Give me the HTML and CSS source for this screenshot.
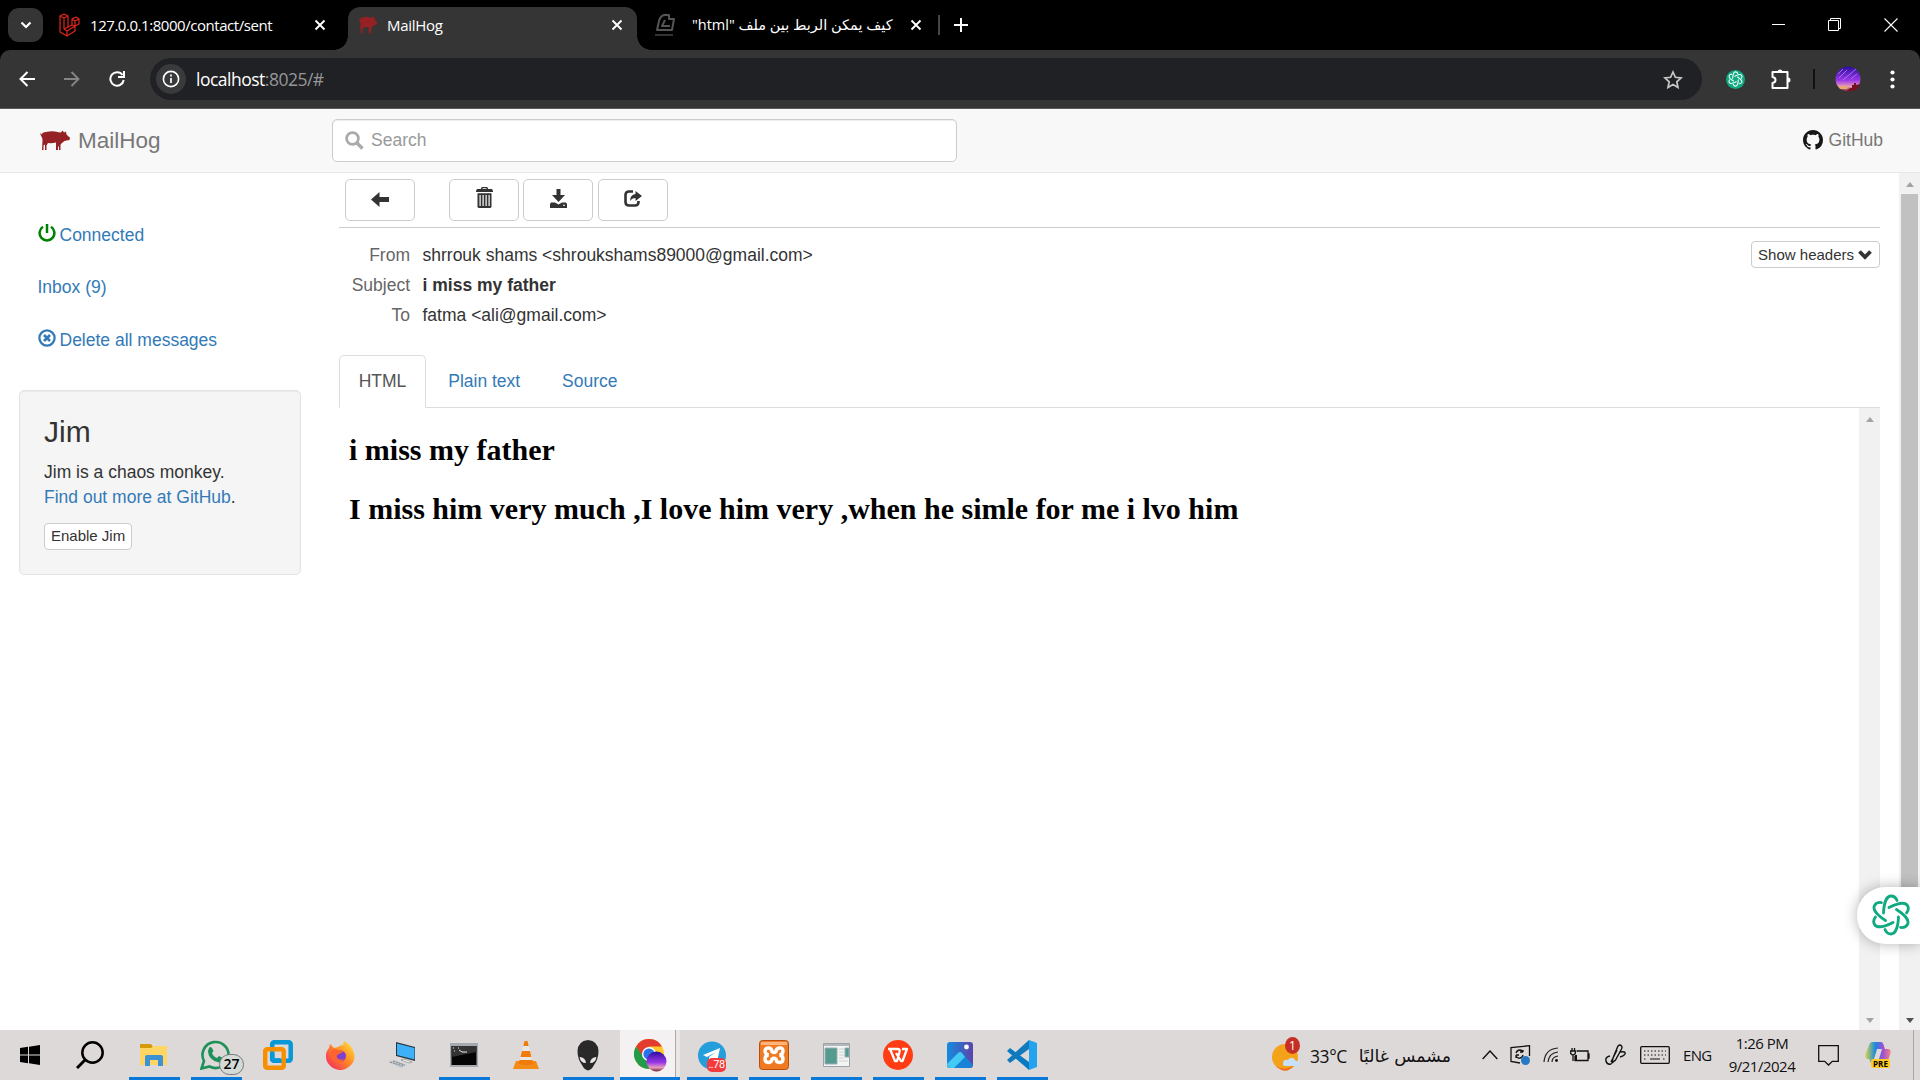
FILE: index.html
```html
<!DOCTYPE html>
<html lang="en">
<head>
<meta charset="utf-8">
<title>MailHog</title>
<link rel="stylesheet" href="styles.css">
</head>
<body>
<svg class="defs" width="0" height="0">
  <symbol id="pig" viewBox="0 0 30 20"><path d="M1.500 6Q0 4 .5 2.500L2 4q0-2.500 4-2.500 5-1 9-.5 4 1 6 1l1.500-2L24 2l2-1 .5 3 2 2 1.500 1-.5 2.500-3 .5q-2 0-4 2l-2 2v5.500h-1.500v-4l-1 1v3h-2V12q-4 1-8 .5L6.500 15v4.500H5V14l-1.500 1v4.500H2L2.500 10Q2.500 8 1.500 6z"/></symbol>
  <symbol id="knot" viewBox="0 0 40 42"><g fill="none" stroke="currentColor" stroke-width="2.800" stroke-linecap="round"><path id="petal" d="M12.500 19C13 8 16 2 20 2c3 0 5 2 6 4.500"/><use href="#petal" transform="rotate(60 20 21)"/><use href="#petal" transform="rotate(120 20 21)"/><use href="#petal" transform="rotate(180 20 21)"/><use href="#petal" transform="rotate(240 20 21)"/><use href="#petal" transform="rotate(300 20 21)"/></g></symbol>
  <symbol id="cross" viewBox="0 0 12 12"><path d="m1.500 1.500 9 9m0-9-9 9" fill="none" stroke="currentColor" stroke-width="1.900"/></symbol>
  <linearGradient id="night" x2="0" y2="1"><stop stop-color="#2c0ca0"/><stop offset=".55" stop-color="#9a38e8"/><stop offset=".8" stop-color="#e79abb"/><stop offset="1" stop-color="#722032"/></linearGradient>
</svg>

<header class="tabstrip">
  <button class="tab-search"><svg width="12" height="8" viewBox="0 0 12 8"><path d="m1.500 1.500 4.500 4.500 4.500-4.500" fill="none" stroke="#fff" stroke-width="2.200"/></svg></button>
  <div class="tab tab-laravel">
    <svg width="21" height="24" viewBox="0 0 21 24" fill="none" stroke="#e3261c" stroke-width="1.200" stroke-linejoin="round"><path d="m1 3 4-2 4 2v11l4-2V6l4-2 3 2v5l-4 2v5l-8 5-7-4zm0 0 4 2 4-2M5 5v11l4-2m-4 2 3 2 8-5m-8 5v5m5-17 3 2 4-2m-4 2v5m-3-1 3 1"/></svg>
    <span class="tab-title title-laravel">127.0.0.1:8000/contact/sent</span>
    <svg class="tab-close" width="12" height="12"><use href="#cross"/></svg>
  </div>
  <div class="tab tab-active">
    <svg width="18" height="18" viewBox="0 0 30 20" preserveAspectRatio="none" fill="#962124"><use href="#pig" width="30" height="20"/></svg>
    <span class="tab-title title-mailhog">MailHog</span>
    <svg class="tab-close" width="12" height="12"><use href="#cross"/></svg>
  </div>
  <div class="tab tab-arabic">
    <svg width="20" height="24" viewBox="0 0 20 24" fill="none" stroke="#555" stroke-width="2"><path d="M2 17 4 8q2-7 8-6h2v4h5l-2 11zM10 7 7 13h8" stroke-linejoin="round"/><path d="M0 22h18" stroke="#333"/></svg>
    <span class="tab-title title-arabic" dir="rtl">كيف يمكن الربط بين ملف "html"</span>
    <svg class="tab-close" width="12" height="12"><use href="#cross"/></svg>
  </div>
  <span class="tab-divider"></span>
  <svg class="new-tab" width="14" height="14" viewBox="0 0 14 14"><path d="M7 0v14M0 7h14" stroke="#fff" stroke-width="2"/></svg>
  <div class="window-controls">
    <svg width="13" height="13" viewBox="0 0 13 13"><path d="M0 6.500h13" stroke="#fff"/></svg>
    <svg width="13" height="13" viewBox="0 0 13 13" fill="none" stroke="#fff"><path d="M.5 2.500h10v10H.5zM2.500 2V.5h10v10H11"/></svg>
    <svg width="14" height="14" viewBox="0 0 14 14"><path d="m.5.5 13 13m0-13-13 13" stroke="#fff" stroke-width="1.100"/></svg>
  </div>
</header>

<div class="toolbar">
  <div class="nav-buttons">
    <svg width="16" height="16" viewBox="0 0 16 16" fill="none" stroke="#fff" stroke-width="2"><path d="M16 8H1.500M8.500 1l-7 7 7 7"/></svg>
    <svg width="16" height="16" viewBox="0 0 16 16" fill="none" stroke="#858585" stroke-width="1.900"><path d="M0 8h14.500M7.500 1l7 7-7 7"/></svg>
    <svg width="16" height="16" viewBox="0 0 16 16" fill="none" stroke="#fff" stroke-width="2"><path d="M13.500 4A6.700 6.700 0 1 0 14.700 9M15 0v6H9"/></svg>
  </div>
  <div class="omnibox">
    <span class="site-info"><svg width="18" height="18" viewBox="0 0 18 18"><circle cx="9" cy="9" r="7.600" fill="none" stroke="#fff" stroke-width="1.600"/><path d="M9 8v5M9 4.500v2" stroke="#fff" stroke-width="1.700"/></svg></span>
    <span class="url"><b>localhost</b>:8025/#</span>
    <svg class="star" width="20" height="19" viewBox="0 0 20 19"><path d="m10 2 2.400 5.300 5.700.6-4.300 3.900 1.200 5.700-5-2.900-5 2.900 1.200-5.700L1.900 7.900l5.700-.6z" fill="none" stroke="#c7c7c7" stroke-width="1.700"/></svg>
  </div>
  <div class="extensions">
    <span class="gpt"><svg width="15" height="16"><use href="#knot"/></svg></span>
    <svg class="puzzle" width="22" height="21" viewBox="0 0 22 21"><path d="M2.500 3h15v16h-15v-5q3-.5 3-3t-3-3z" fill="none" stroke="#fff" stroke-width="2" stroke-linejoin="round"/><path d="M7.500 3a2.500 2.500 0 0 1 5 0zm10.500 5.500a2.500 2.500 0 0 1 0 5z" fill="#fff"/></svg>
    <span class="ext-divider"></span>
    <svg class="avatar" width="26" height="26" viewBox="0 0 26 26"><circle cx="13" cy="13" r="12.500" fill="url(#night)"/><path d="m4 12 8-8m-4 10 13-11M3 8l5-5m8 10 6-5" stroke="#b585f5" stroke-width=".8"/><path d="M15 22h2v-3h2v-2h2v2l4-1q-2 5-6 7h-7z" fill="#741222"/><path d="M3 20h10l-1 3H5z" fill="#e9aa70"/></svg>
    <svg width="5" height="19" viewBox="0 0 5 19" fill="#fff"><circle cx="2.500" cy="2.500" r="2.100"/><circle cx="2.500" cy="9.500" r="2.100"/><circle cx="2.500" cy="16.500" r="2.100"/></svg>
  </div>
</div>

<nav class="navbar">
  <a class="brand"><svg width="30" height="21" fill="#962124"><use href="#pig"/></svg>MailHog</a>
  <div class="search"><svg width="19" height="19" viewBox="0 0 19 19" fill="none" stroke="#aaa"><circle cx="7.500" cy="7.500" r="5.900" stroke-width="2.700"/><path d="m12 12 5.500 5.500" stroke-width="3.400"/></svg>Search</div>
  <a class="github"><svg width="20" height="20" viewBox="0 0 16 16" fill="#181616"><path d="M8 0C3.580 0 0 3.580 0 8c0 3.540 2.290 6.530 5.470 7.590.4.070.55-.17.55-.38 0-.19-.01-.82-.01-1.490-2.010.37-2.530-.49-2.690-.94-.09-.23-.48-.94-.82-1.130-.28-.15-.68-.52-.01-.53.63-.01 1.080.58 1.230.82.72 1.210 1.870.87 2.330.66.070-.52.28-.87.51-1.070-1.780-.2-3.640-.89-3.640-3.950 0-.87.31-1.590.82-2.150-.08-.2-.36-1.020.08-2.120 0 0 .67-.21 2.200.82.64-.18 1.320-.27 2-.27s1.360.09 2 .27c1.530-1.040 2.200-.82 2.200-.82.44 1.100.16 1.920.08 2.120.51.56.82 1.270.82 2.150 0 3.070-1.870 3.750-3.650 3.950.29.25.54.73.54 1.480 0 1.070-.01 1.930-.01 2.200 0 .21.15.46.55.38A8 8 0 0 0 16 8c0-4.420-3.580-8-8-8"/></svg>GitHub</a>
</nav>

<div class="page">
  <aside class="sidebar">
    <ul class="menu">
      <li><svg width="18" height="18" viewBox="0 0 18 18" fill="none" stroke="green" stroke-width="2.500"><path d="M5 2.800a7.400 7.400 0 1 0 8 0M9 0v9"/></svg>Connected</li>
      <li>Inbox (9)</li>
      <li><svg width="18" height="18" viewBox="0 0 18 18" fill="none" stroke="#337ab7" stroke-width="2.300"><circle cx="9" cy="9" r="7.600"/><path d="m6 6 6 6m0-6-6 6" stroke-width="2.700"/></svg>Delete all messages</li>
    </ul>
    <section class="well">
      <h3>Jim</h3>
      <p>Jim is a chaos monkey.<br><a>Find out more at GitHub</a>.</p>
      <button class="btn-xs">Enable Jim</button>
    </section>
  </aside>

  <main class="message">
    <div class="actions">
      <button class="btn back"><svg width="18" height="15" viewBox="0 0 18 15"><path d="M0 7.500 8.500 0v5H18v5H8.500v5z"/></svg></button>
      <button class="btn trash"><svg width="17" height="21" viewBox="0 0 17 21"><path d="M5 2V1l1-1h5l1 1v1h4l1 2v1H0V4l1-2zm1.500 0h4v-.7h-4zM1.500 6.300h14V20l-1 1h-12l-1-1zM3.500 8v11h1.200V8zm3 0v11h1.200V8zm3 0v11h1.200V8zm3 0v11h1.200V8z" fill-rule="evenodd"/></svg></button>
      <button class="btn"><svg width="17" height="19" viewBox="0 0 17 19"><path d="M6.500 0h4v6H15l-6.500 7L2 6h4.500zM1 13.500h4l3.500 2 3.500-2h4l1 1.500v4H0v-4zm12 2.200v1h2v-1z" fill-rule="evenodd"/></svg></button>
      <button class="btn"><svg width="18" height="17" viewBox="0 0 18 17"><path d="M9 1.500H5Q1.500 1.500 1.500 5v7q0 3.500 3.500 3.500h6q3.500 0 3.500-3.500v-1" fill="none" stroke="#333" stroke-width="2.600"/><path d="m11.500 1 6.500 5-6.500 5V8Q8 8 6 11q0-6 5.500-7z"/></svg></button>
    </div>
    <div class="headers">
      <dl><dt>From</dt><dd>shrrouk shams &lt;shroukshams89000@gmail.com&gt;</dd><dt>Subject</dt><dd><b>i miss my father</b></dd><dt>To</dt><dd>fatma &lt;ali@gmail.com&gt;</dd></dl>
      <button class="btn-xs">Show headers <svg width="14" height="10" viewBox="0 0 14 10"><path d="m1.500 1.500 5.500 5.500 5.500-5.500" fill="none" stroke="#333" stroke-width="3.800"/></svg></button>
    </div>
    <div class="tabs"><a class="current">HTML</a><a>Plain text</a><a>Source</a></div>
    <div class="frame">
      <article><h2>i miss my father</h2><h2>I miss him very much ,I love him very ,when he simle for me i lvo him</h2></article>
      <div class="scrollbar inner"><i class="up"></i><i class="down"></i></div>
    </div>
  </main>
  <div class="scrollbar outer"><i class="up"></i><div class="thumb"></div><i class="down dark"></i></div>
  <div class="gpt-float"><svg width="40" height="42"><use href="#knot"/></svg></div>
</div>

<footer class="taskbar">
  <div class="start"><svg width="20" height="20" viewBox="0 0 20 20"><path d="m0 3 8-1.200v7.700H0zm9-1.300L20 0v9.500H9zM0 10.500h8v7.700L0 17zm9 0h11V20L9 18.300z"/></svg></div>
  <div class="find"><svg width="28" height="28" viewBox="0 0 28 28" fill="none" stroke="#000"><circle cx="16.500" cy="11.500" r="10.200" stroke-width="2.500"/><path d="m9 19-8 8" stroke-width="3"/></svg></div>
  <div class="app open"><svg width="28" height="24" viewBox="0 0 28 24"><path d="M0 1h11l2 3-2 3H0z" fill="#d69a09"/><path d="M0 5h11l3-2h13v19H0z" fill="#ffd563"/><path d="M5 23v-9q0-2 2-2h14q2 0 2 2v9h-5v-6h-8v6z" fill="#3d92d6"/></svg></div>
  <div class="app open whatsapp"><svg width="30" height="30" viewBox="0 0 30 30"><path d="M1.500 28.500 4 21A13 13 0 1 1 9.500 26.500z" fill="none" stroke="#1d9159" stroke-width="2.600"/><path d="M9 8q1-2 3 0l1.500 3-1.500 2q1.500 4 5 5l2-2 4 2q0 4-4 4.500Q8 20 8 11z" fill="#1d9159"/></svg><span class="count">27</span></div>
  <div class="app"><svg width="30" height="30" viewBox="0 0 30 30" fill="none" stroke-width="4.500"><rect x="9.200" y="2.200" width="18.500" height="18.500" rx="2" stroke="#0798d5"/><rect x="2.200" y="9.200" width="18.500" height="18.500" rx="2" stroke="#f79000"/><path d="M9.200 13v5.500q0 2 2 2h6" stroke="#0798d5"/></svg></div>
  <div class="app"><svg width="29" height="29" viewBox="0 0 29 29"><linearGradient id="fire" x1="1" x2="0" y2="1"><stop stop-color="#fff044"/><stop offset=".45" stop-color="#ff8b24"/><stop offset="1" stop-color="#f21d68"/></linearGradient><path d="M3 7 4 3l4 4 4-1q2-2 5-2l1-4q8 4 10 12 2 8-4 13-8 7-17 2Q-1 22 0 13q1-4 3-6z" fill="url(#fire)"/><circle cx="14.500" cy="15" r="5.500" fill="#8140cc"/><path d="M5 10q3-3 7-1 5 0 5 2l-4 2q-3 1-2 4 3 3 7 1-4 6-10 2-4-3-3-10z" fill="#ff642f"/></svg></div>
  <div class="app"><svg width="28" height="26" viewBox="0 0 28 26"><path d="m8 0 19 5v14L8 14z" fill="#28353b"/><path d="m9 1.500 17.500 4.500v11.500L9 13z" fill="#3db0f7"/><path d="m0 20 6-2 13 5-6 3z" fill="#c2c8cc"/><path d="m2 20 13 4m-10-5 12 4" stroke="#7c868d" stroke-dasharray="2 1"/><path d="m13 18 3-1 8 3-3 1z" fill="#f5f5f5" stroke="#777" stroke-width=".6"/></svg></div>
  <div class="app open"><svg width="28" height="24" viewBox="0 0 28 24"><path d="M0 0h28v24H0z" fill="#a6aaae"/><path d="M1.500 3h25v19h-25z" fill="#050505"/><path d="M1.500 3h25v6L1.500 14z" fill="#333"/><path d="M3 5h1m0 3h1m3-3h1m0 2 3 2h5" stroke="#eee" fill="none"/></svg></div>
  <div class="app"><svg width="26" height="30" viewBox="0 0 26 30"><path d="m3 21-3 8h26l-3-8z" fill="#f48b12"/><path d="m11.500 1h3L20 24q-7 4-14 0z" fill="#e9e7e5"/><path d="M11.500 1h3l1.200 5h-5.400zM9 11h8l1.400 6H7.500zM6.500 20h13l1 4q-7 4-15 0z" fill="#f17b08"/></svg></div>
  <div class="app open"><svg width="22" height="31" viewBox="0 0 22 31"><path d="M11 0q10 1 10.500 11 0 8-4.500 14-2 4.500-6 5.500-4-1-6-5.500Q.5 19 .5 11 1 1 11 0z" fill="#292929"/><path d="M2.500 17q6 .5 6.500 6-5.500 0-6.500-6zm17 0q-6 .5-6.500 6 5.500 0 6.500-6z" fill="#e9e6e6"/></svg></div>
  <div class="app open active"><svg width="33" height="33" viewBox="0 0 33 33"><circle cx="15" cy="15" r="15" fill="#ffc928"/><path d="M2 7.500A15 15 0 0 1 28 7.500H15L8 17z" fill="#e33b2e"/><path d="M2 7.500A15 15 0 0 0 15 30l7-12-7 3-6-4z" fill="#249b49"/><circle cx="15" cy="15" r="7" fill="#fff"/><circle cx="15" cy="15" r="5.600" fill="#2874e8"/><circle cx="22.500" cy="22.500" r="10" fill="url(#night)"/></svg></div>
  <div class="app open"><svg class="telegram" width="28" height="29" viewBox="0 0 28 29"><circle cx="14" cy="14.500" r="14" fill="#259fdb"/><path d="m5 14 17-7-3 14-5-3-3 3v-5l7-5-9 5z" fill="#fff"/></svg><span class="unread">..78</span></div>
  <div class="app open"><svg width="30" height="30" viewBox="0 0 30 30"><rect x=".5" y=".5" width="29" height="29" rx="3" fill="#ef7a21" stroke="#b94d0d"/><path d="M2 2h26v3H2z" fill="#ffb47b"/><path d="M13 11.500q0-3.500-3.500-3.500T6 11t3.500 4Q6 15.500 6 19t3.500 3.500T13 19q2-1.500 4 0 0 3.500 3.500 3.500T24 19t-3.500-4q3.500-.5 3.500-4t-3.500-3-3.500 3.500q-2 2-4 0z" fill="none" stroke="#fff" stroke-width="3.400"/></svg></div>
  <div class="app open"><svg width="27" height="24" viewBox="0 0 27 24"><path d="M.5.500h26v23H.5z" fill="#f3f5f5" stroke="#9ba1a5"/><path d="M1 1h25v2H1z" fill="#b1b7bb"/><path d="M2 5h12v16H2zm20 0h4v9h-4z" fill="#539b8d" stroke="#9da9b8"/><path d="M16 6h5m-5 3h5m-5 3h5m-5 3h5m-5 3h9" stroke="#ccc"/></svg></div>
  <div class="app open"><svg width="30" height="30" viewBox="0 0 30 30"><circle cx="15" cy="15" r="15" fill="#ff3c13"/><path d="M5 9h9.500q3 0 2 3L14 21h-2L7 9m6 4 5 8h1.500L24 9h-5" fill="none" stroke="#fff" stroke-width="2.300" stroke-linejoin="round"/></svg></div>
  <div class="app open"><svg width="26" height="26" viewBox="0 0 26 26"><linearGradient id="photo"><stop stop-color="#138be0"/><stop offset="1" stop-color="#5d45a9"/></linearGradient><rect width="26" height="26" rx="3" fill="url(#photo)"/><path d="m0 23 11-12q2-2 4 0l11 12q-1 3-4 3H4q-4 0-4-3z" fill="#1782d6"/><path d="m0 22 11-11q2-2 4 0l3 4L7 26H4q-4 0-4-4z" fill="#42c9f4"/><circle cx="19.500" cy="5" r="2.400" fill="#fff"/></svg></div>
  <div class="app open"><svg width="30" height="30" viewBox="0 0 30 30"><path d="m3 8 19 14v8L0 11z" fill="#087ac4"/><path d="M22 0v9L3 23l-3-3z" fill="#1279bd"/><path d="m22 0 8 3v24l-8 3z" fill="#22a2ef"/></svg></div>

  <div class="weather"><span class="sun"><svg width="28" height="36" viewBox="0 0 28 36"><circle cx="13" cy="20" r="13" fill="#f5a21b"/><path d="M4 29q9 6 18-1-8 11-18 1z" fill="#f06c1b"/><path d="M11 27q0-5 5-4 4-5 8 1 4 0 3 5H14q-3 0-3-2z" fill="#c8e1fa"/></svg><b>1</b></span><span class="degrees">33°C</span><span class="forecast" dir="rtl">مشمس غالبًا</span></div>
  <div class="tray">
    <svg width="16" height="10" viewBox="0 0 16 10"><path d="m.7 9 7.300-8 7.300 8" fill="none" stroke="#111" stroke-width="1.400"/></svg>
    <svg class="sync" width="21" height="20" viewBox="0 0 21 20" fill="none" stroke="#111" stroke-width="1.300"><path d="M10 18 1 16.500V2.500L19.500.7V11M6 8q1-3 4-3 2 0 3 2V5m0 2h-3m-4 3v3m0-3h3m-3 1q2 3 4 2 2 0 3-3"/><circle cx="15.500" cy="15.500" r="4.500" fill="#2879c4" stroke="none"/></svg>
    <svg class="wifi" width="16" height="16" viewBox="0 0 16 16" fill="none" stroke="#222" stroke-width="1.200"><path d="M1 15Q2 2 15 1M5 15q1-9 10-10M9 15q0-5 6-6"/><circle cx="13.500" cy="13.500" r="1.400" fill="#111" stroke="none"/></svg>
    <svg class="battery" width="20" height="14" viewBox="0 0 20 14" fill="none" stroke="#111" stroke-width="1.300"><path d="M6.500 3H18v9.500H5V8m13-2h1v4h-1M.7 3h4.600v2.500q-2.300 3-4.600 0zM2 3V0m2.500 3V0M3 7v6"/><path d="M5 7h2v5H5z" fill="#111" stroke="none"/></svg>
    <svg class="pen" width="21" height="22" viewBox="0 0 21 22" fill="none" stroke="#111" stroke-width="1.400"><path d="m7 19 1-5 5-12q2-2 3.500 0 1 1 0 3l-6 11zM5 12Q0 13 1 17t5 3M15 8q6-1 5 2-1 2-5 3m-3-7-6 12"/></svg>
    <svg class="keyboard" width="30" height="18" viewBox="0 0 30 18" fill="none" stroke="#111"><rect x=".7" y=".7" width="28.600" height="16.600" rx="1" stroke-width="1.300"/><path d="M4 5h22M4 9h22M4 13h3m16 0h3" stroke-dasharray="1.500 2"/><path d="M10 13h10"/></svg>
    <span class="lang">ENG</span>
    <div class="clock"><span>1:26 PM</span><span>9/21/2024</span></div>
    <svg class="notice" width="21" height="21" viewBox="0 0 21 21"><path d="M.7.700h19.600v15.600h-6L10.500 20l-3.800-3.700h-6z" fill="none" stroke="#111" stroke-width="1.300"/></svg>
    <div class="copilot"><svg width="26" height="24" viewBox="0 0 26 24"><linearGradient id="cop" x2="1"><stop stop-color="#d4d347"/><stop offset=".4" stop-color="#188ae1"/><stop offset=".7" stop-color="#a34ed5"/><stop offset="1" stop-color="#f0897a"/></linearGradient><path d="M7 0h9q2 0 3 4l1 3h3q4 0 2 6l-2 6q-1 4-5 4H9q-3 0-4-4l-1-2H3q-4 0-2-6L4 3q1-3 3-3zm5 7-3 10h5l3-10z" fill="url(#cop)"/></svg><b>PRE</b></div>
    <span class="peek"></span>
  </div>
</footer>
</body>
</html>
```
FILE: styles.css
```css
* { box-sizing: border-box; }
body { margin: 0; width: 1920px; height: 1080px; overflow: hidden; display: flex; flex-direction: column; background: #fff; color: #333; font: 17.5px/25px "Liberation Sans", Arial, sans-serif; }
svg { display: block; flex: none; }
.defs { position: absolute; }
button { font: inherit; color: inherit; padding: 0; }
h2, h3, p, ul, dl, dd { margin: 0; padding: 0; }

.tabstrip { height: 50px; flex: none; background: #000; display: flex; color: #fff; font: 15px/20px "Open Sans", "Noto Sans", sans-serif; }
.tab-search { width: 35px; height: 34px; margin: 8px 16px 0 8px; border: 0; border-radius: 11px; background: #353535; display: flex; align-items: center; justify-content: center; }
.tab { display: flex; align-items: center; height: 43px; margin-top: 7px; padding-bottom: 7px; }
.tab-title { white-space: nowrap; }
.tab-close { margin-left: auto; }
.tab-laravel { width: 289px; padding-right: 22px; gap: 10px; }
.title-laravel { letter-spacing: -.45px; }
.tab-active { position: relative; width: 289px; padding-left: 11px; padding-right: 14px; gap: 10px; background: #353535; border-radius: 12px 12px 0 0; }
.tab-active::before, .tab-active::after { content: ""; position: absolute; bottom: 0; width: 14px; height: 14px; }
.tab-active::before { left: -14px; background: radial-gradient(circle at 0 0, transparent 13.500px, #353535 14px); }
.tab-active::after { right: -14px; background: radial-gradient(circle at 100% 0, transparent 13.500px, #353535 14px); }
.title-mailhog { letter-spacing: -.3px; }
.tab-arabic { width: 283px; padding-left: 18px; padding-right: 2px; gap: 17px; }
.title-arabic { width: 202px; font-family: "Open Sans", "DejaVu Sans", sans-serif; font-size: 14.500px; }
.tab-divider { width: 2px; height: 20px; margin: 15px 14px 0 18px; background: #454545; }
.new-tab { margin-top: 18px; }
.window-controls { margin-left: auto; display: flex; gap: 43px; padding: 18px 22px 0 0; }

.toolbar { height: 59px; flex: none; display: flex; align-items: center; background: #353535; border-bottom: 1px solid #5e5a5d; border-radius: 10px 10px 0 0; box-shadow: 0 -10px 0 #000; }
.toolbar { box-shadow: none; }
.tabstrip { margin-bottom: -10px; height: 60px; padding-bottom: 10px; background: linear-gradient(#000 0 0); }
.tab-active { z-index: 1; }
.toolbar { position: relative; }
.nav-buttons { width: 150px; display: flex; gap: 29px; padding-left: 19px; }
.omnibox { width: 1552px; height: 42px; border-radius: 21px; background: #202124; display: flex; align-items: center; padding: 0 19px 0 6px; }
.site-info { width: 30px; height: 30px; border-radius: 50%; background: #393a3c; display: flex; align-items: center; justify-content: center; }
.url { margin-left: 10px; color: #969799; font: 17.5px/24px "Open Sans", "Noto Sans", sans-serif; letter-spacing: -.5px; }
.url b { font-weight: 400; color: #fff; }
.star { margin-left: auto; }
.extensions { display: flex; align-items: center; padding-left: 24px; }
.gpt { width: 19px; height: 19px; border-radius: 50%; background: #0fa982; color: #fff; display: flex; align-items: center; justify-content: center; }
.puzzle { margin-left: 25px; }
.ext-divider { width: 2px; height: 20px; margin: 0 20px 0 21px; background: #111; }
.avatar { margin-right: 29px; }

.navbar { height: 64px; flex: none; background: #f8f8f8; border-bottom: 1px solid #e7e7e7; color: #777; display: flex; align-items: center; padding: 0 37px 1px 40px; }
.brand { width: 292px; display: flex; align-items: center; gap: 8px; font-size: 22.5px; }
.search { width: 625px; height: 43px; border: 1px solid #ccc; border-radius: 5px; background: #fff; box-shadow: inset 0 1px 1px rgba(0,0,0,.075); color: #999; display: flex; align-items: center; gap: 7px; padding-left: 12px; }
.github { margin-left: auto; display: flex; align-items: center; gap: 6px; }

.page { position: relative; height: 857px; flex: none; display: flex; }
.sidebar { width: 339px; flex: none; padding: 36px 38px 0 19px; color: #337ab7; }
.menu { list-style: none; }
.menu li { height: 52.400px; padding: 14px 18.500px; display: flex; gap: 4px; white-space: nowrap; }
.menu svg { margin-top: 1px; }
.well { height: 185px; margin-top: 23.600px; padding: 24px 24px; border: 1px solid #e3e3e3; border-radius: 5px; background: #f5f5f5; box-shadow: inset 0 1px 1px rgba(0,0,0,.05); color: #333; }
.well h3 { font-weight: 400; font-size: 30px; line-height: 33px; margin-bottom: 12px; }
.well p { margin-bottom: 13px; }
.well a { color: #337ab7; }
.btn-xs { height: 27px; border: 1px solid #ccc; border-radius: 4px; background: #fff; padding: 0 6px; font-size: 15px; line-height: 22px; display: flex; gap: 4px; align-items: center; white-space: nowrap; }
.headers .btn-xs { padding-right: 7px; }
.message { width: 1541px; flex: none; display: flex; flex-direction: column; }
.actions { height: 55px; flex: none; border-bottom: 1px solid #ccc; display: flex; gap: 4.300px; padding: 6px; }
.btn { width: 70px; height: 42px; border: 1px solid #ccc; border-radius: 5px; background: #fff; display: flex; align-items: center; justify-content: center; fill: #333; padding-bottom: 4px; }
.back { margin-right: 29.800px; padding-bottom: 2px; }
.trash { padding-bottom: 6px; padding-left: 1px; }
.headers { height: 127px; flex: none; display: flex; justify-content: space-between; padding-top: 13px; }
.headers dl { display: grid; grid-template-columns: 71px auto; grid-auto-rows: 30px; column-gap: 12.500px; line-height: 30px; align-self: flex-start; margin-top: -1px; }
.headers dt { color: #666; text-align: right; }
.tabs { height: 53px; flex: none; border-bottom: 1px solid #ddd; display: flex; gap: 2.500px; }
.tabs a { height: 53px; color: #337ab7; border: 1px solid transparent; padding: 12.500px 18.700px; }
.tabs .current { color: #555; background: #fff; border-color: #ddd #ddd #fff; border-radius: 5px 5px 0 0; }
.frame { flex: 1; display: flex; }
article { flex: 1; padding: 25px 10px; color: #000; font-family: "Liberation Serif", "Times New Roman", serif; }
article h2 { font-size: 30px; line-height: 34px; margin-bottom: 25px; }
.scrollbar { width: 21px; background: #f1f1f1; display: flex; flex-direction: column; align-items: center; justify-content: space-between; padding: 9px 0 7px; }
.scrollbar i { width: 0; height: 0; border: 4.500px solid transparent; border-top-width: 0; border-bottom: 5px solid #a3a3a3; flex: none; }
.scrollbar .down { border-top: 5px solid #a3a3a3; border-bottom-width: 0; }
.scrollbar .dark { border-top-color: #505050; margin-top: auto; }
.outer { margin-left: 19px; }
.thumb { width: 17px; height: 720px; margin-top: 7px; background: #c1c1c1; }
.gpt-float { position: absolute; right: 0; top: 714px; width: 63px; height: 57px; border-radius: 28px 0 0 28px; background: #fff; color: #0fa982; box-shadow: 0 0 14px rgba(0,0,0,.3); padding: 7px 0 0 14px; }

.taskbar { height: 50px; flex: none; background: #ded9d9; color: #111; display: flex; font: 17.5px/24px "Open Sans", "Noto Sans", sans-serif; }
.start, .find, .app { display: flex; align-items: center; justify-content: center; flex: none; }
.start { width: 60px; }
.find { width: 63px; padding-right: 4px; }
.app { position: relative; width: 62px; }
.open::after { content: ""; position: absolute; left: 6px; right: 5px; bottom: 0; height: 3px; background: #0879d8; }
.whatsapp { padding-right: 2px; }
.active { background: linear-gradient(90deg, transparent 1px, #f3f1f1 1px 56px, #aaa 56px 57px, #e9e6e6 57px 61px, transparent 61px); }
.active::after { left: 1px; right: 1px; }
.count { position: absolute; left: 34px; top: 24px; width: 25px; height: 21px; border: 1px solid #777; border-radius: 11px; background: #d4dbd7; color: #000; font: 600 14px/18px "Open Sans", sans-serif; text-align: center; }
.unread { position: absolute; left: 26px; top: 28px; width: 19px; height: 14px; border-radius: 5px; background: #f33b3b; color: #fff; font: 11px/14px Roboto, sans-serif; text-align: center; letter-spacing: -.5px; }
.weather { display: flex; align-items: center; margin-left: auto; width: 210px; }
.sun { position: relative; }
.sun b { position: absolute; right: 0; top: 0; width: 15px; height: 17px; border-radius: 50%; background: #c62f24; color: #fff; font: 12px/17px "Open Sans", sans-serif; text-align: center; }
.degrees { margin: 2px 0 0 10px; font-size: 17.500px; letter-spacing: -.4px; width: 38px; }
.forecast { margin: 2px 0 0 10px; width: 93px; white-space: nowrap; font: 17.300px/24px "DejaVu Sans", sans-serif; }
.tray { width: 438px; display: flex; align-items: center; }
.sync { margin-left: 12px; }
.wifi { margin-left: 12px; }
.battery { margin-left: 11px; }
.pen { margin-left: 15px; }
.keyboard { margin-left: 14px; }
.lang { margin-left: 13px; width: 28px; font-size: 15px; letter-spacing: -.7px; }
.clock { width: 72px; margin-left: 15px; display: flex; flex-direction: column; align-items: center; font-size: 15px; line-height: 23px; letter-spacing: -.5px; white-space: nowrap; }
.notice { margin-left: 20px; }
.copilot { position: relative; margin: -3px 0 0 26px; }
.copilot b { position: absolute; left: 6px; top: 17px; width: 19px; height: 9px; background: #ffcb22; border-radius: 2px; color: #000; font: 700 8px/9px "Open Sans", sans-serif; text-align: center; }
.peek { width: 1px; height: 50px; margin-left: 22px; background: #aaa6a6; }
```
